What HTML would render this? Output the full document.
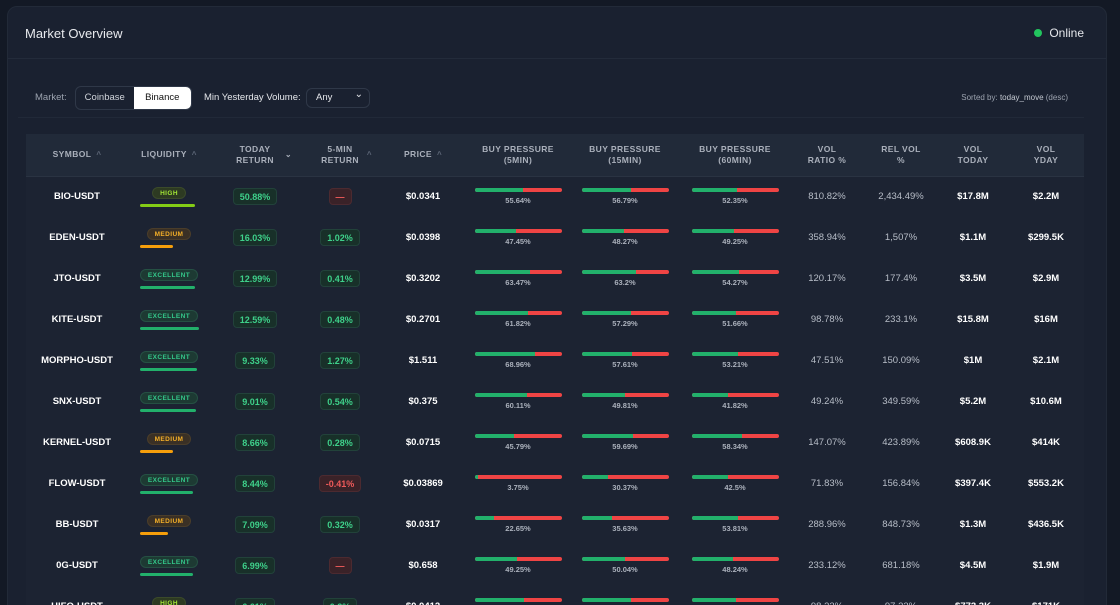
<!DOCTYPE html>
<html style="width:1120px;height:605px;overflow:hidden"><head><meta charset="utf-8"><style>
*{box-sizing:border-box;margin:0;padding:0}
html,body{width:1120px;height:605px;overflow:hidden}
body{background:#131925;font-family:"Liberation Sans",sans-serif;color:#e5e7eb;position:relative}
.card{position:absolute;left:7px;top:6px;width:1100px;height:640px;background:#1a2130;border:1px solid #222a38;border-radius:10px}
.hdr{position:absolute;left:0;top:0;width:100%;height:52px;border-bottom:1px solid #232b3a}
.title{position:absolute;left:17px;top:19px;font-size:13px;color:#e8eaee}
.online{position:absolute;right:22px;top:19px;font-size:12px;color:#e5e7eb}
.online:before{content:"";display:inline-block;width:8px;height:8px;border-radius:50%;background:#22c55e;margin-right:7px;vertical-align:0px}
.ctrl{position:absolute;left:18px;top:80px;width:1066px;height:38px;border-bottom:1px solid #212938}
.lbl{position:absolute;font-size:9.5px;color:#9ca3af}
.seg{position:absolute;left:57px;top:6px;width:117px;height:24px;border:1px solid #2f3848;border-radius:6px;display:flex;overflow:hidden;font-size:9.5px}
.seg div{flex:1;text-align:center;line-height:22px;color:#d1d5db}
.seg .on{background:#fff;color:#111}
.sel{position:absolute;left:288px;top:8px;width:64px;height:20px;border:1px solid #2f3848;border-radius:6px;font-size:9.5px;line-height:18px;padding-left:9px;color:#e5e7eb}
.sel:after{content:"⌄";position:absolute;right:6px;top:-3px;font-size:10px}
table{position:absolute;left:26px;top:134px;border-collapse:collapse;table-layout:fixed;width:1058px}
th{height:42px;background:#212a39;font-size:8.5px;color:#aab0bb;font-weight:bold;letter-spacing:.4px;line-height:11px;border-bottom:1px solid #2a3342;text-align:center;position:relative}
th span{color:#5d6677;font-size:8px;margin-left:5px}
td{height:41px;text-align:center;font-size:9.5px;color:#fff;background:#1c2332;font-weight:bold}
td.m{color:#b8bec8;font-weight:normal}
.badge{display:inline-block;padding:0 7px;height:12px;line-height:12px;border-radius:7px;font-size:6.5px;font-weight:bold;letter-spacing:.4px}
.hi{background:#2d3a22;color:#a3e635;border:1px solid #3b4a2a}
.me{background:#3a3025;color:#f5b028;border:1px solid #4a3d2a}
.ex{background:#1d3a33;color:#34c78a;border:1px solid #255043}
.ul{height:3px;border-radius:2px;margin:5px 0 0 12px}
.ret{display:inline-block;padding:0 6px;height:17px;line-height:17px;border-radius:4px;font-size:9px;background:#183029;color:#3ed08a;border:1px solid #22423a}
.neg{background:#3a2228;color:#ef5a5a;border:1px solid #4c2a30}
.bar{width:87px;height:4px;border-radius:2px;background:#ef4444;margin:0 auto;overflow:hidden}
.bar i{display:block;height:4px;background:#22b06b}
.pc{font-size:7.5px;color:#aab0bb;margin-top:4px;font-weight:bold}
</style></head><body>
<div class="card">
<div class="hdr"><div class="title">Market Overview</div><div class="online">Online</div></div>
</div>
<div class="ctrl">
<div class="lbl" style="left:17px;top:12px">Market:</div>
<div class="seg"><div>Coinbase</div><div class="on">Binance</div></div>
<div class="lbl" style="left:186px;top:12px;color:#e5e7eb">Min Yesterday Volume:</div>
<div class="sel">Any</div>
<div class="lbl" style="right:16px;top:13px;font-size:8px">Sorted by: <b style="color:#c4c9d1;font-weight:normal">today_move</b> (desc)</div>
</div>
<table>
<colgroup><col style="width:102px"><col style="width:82px"><col style="width:90px"><col style="width:80px"><col style="width:86px"><col style="width:104px"><col style="width:110px"><col style="width:110px"><col style="width:74px"><col style="width:74px"><col style="width:70px"><col style="width:76px"></colgroup>
<tr><th>SYMBOL<span>^</span></th><th>LIQUIDITY<span>^</span></th><th>TODAY<br>RETURN<span style="position:absolute;right:8px;top:15px;color:#aab0bb">⌄</span></th><th>5-MIN<br>RETURN<span style="position:absolute;right:8px;top:15px">^</span></th><th>PRICE<span>^</span></th><th>BUY PRESSURE<br>(5MIN)</th><th>BUY PRESSURE<br>(15MIN)</th><th>BUY PRESSURE<br>(60MIN)</th><th>VOL<br>RATIO %</th><th>REL VOL<br>%</th><th>VOL<br>TODAY</th><th>VOL<br>YDAY</th></tr>
<tr><td>BIO-USDT</td><td><span class="badge hi">HIGH</span><div class="ul" style="width:55px;background:#84cc16"></div></td><td><span class="ret">50.88%</span></td><td><span class="ret neg">—</span></td><td>$0.0341</td><td><div class="bar"><i style="width:55.6%"></i></div><div class="pc">55.64%</div></td><td><div class="bar"><i style="width:56.8%"></i></div><div class="pc">56.79%</div></td><td><div class="bar"><i style="width:52.3%"></i></div><div class="pc">52.35%</div></td><td class="m">810.82%</td><td class="m">2,434.49%</td><td>$17.8M</td><td>$2.2M</td></tr>
<tr><td>EDEN-USDT</td><td><span class="badge me">MEDIUM</span><div class="ul" style="width:33px;background:#f59e0b"></div></td><td><span class="ret">16.03%</span></td><td><span class="ret">1.02%</span></td><td>$0.0398</td><td><div class="bar"><i style="width:47.4%"></i></div><div class="pc">47.45%</div></td><td><div class="bar"><i style="width:48.3%"></i></div><div class="pc">48.27%</div></td><td><div class="bar"><i style="width:49.2%"></i></div><div class="pc">49.25%</div></td><td class="m">358.94%</td><td class="m">1,507%</td><td>$1.1M</td><td>$299.5K</td></tr>
<tr><td>JTO-USDT</td><td><span class="badge ex">EXCELLENT</span><div class="ul" style="width:55px;background:#22b06b"></div></td><td><span class="ret">12.99%</span></td><td><span class="ret">0.41%</span></td><td>$0.3202</td><td><div class="bar"><i style="width:63.5%"></i></div><div class="pc">63.47%</div></td><td><div class="bar"><i style="width:63.2%"></i></div><div class="pc">63.2%</div></td><td><div class="bar"><i style="width:54.3%"></i></div><div class="pc">54.27%</div></td><td class="m">120.17%</td><td class="m">177.4%</td><td>$3.5M</td><td>$2.9M</td></tr>
<tr><td>KITE-USDT</td><td><span class="badge ex">EXCELLENT</span><div class="ul" style="width:59px;background:#22b06b"></div></td><td><span class="ret">12.59%</span></td><td><span class="ret">0.48%</span></td><td>$0.2701</td><td><div class="bar"><i style="width:61.8%"></i></div><div class="pc">61.82%</div></td><td><div class="bar"><i style="width:57.3%"></i></div><div class="pc">57.29%</div></td><td><div class="bar"><i style="width:51.7%"></i></div><div class="pc">51.66%</div></td><td class="m">98.78%</td><td class="m">233.1%</td><td>$15.8M</td><td>$16M</td></tr>
<tr><td>MORPHO-USDT</td><td><span class="badge ex">EXCELLENT</span><div class="ul" style="width:57px;background:#22b06b"></div></td><td><span class="ret">9.33%</span></td><td><span class="ret">1.27%</span></td><td>$1.511</td><td><div class="bar"><i style="width:69%"></i></div><div class="pc">68.96%</div></td><td><div class="bar"><i style="width:57.6%"></i></div><div class="pc">57.61%</div></td><td><div class="bar"><i style="width:53.2%"></i></div><div class="pc">53.21%</div></td><td class="m">47.51%</td><td class="m">150.09%</td><td>$1M</td><td>$2.1M</td></tr>
<tr><td>SNX-USDT</td><td><span class="badge ex">EXCELLENT</span><div class="ul" style="width:56px;background:#22b06b"></div></td><td><span class="ret">9.01%</span></td><td><span class="ret">0.54%</span></td><td>$0.375</td><td><div class="bar"><i style="width:60.1%"></i></div><div class="pc">60.11%</div></td><td><div class="bar"><i style="width:49.8%"></i></div><div class="pc">49.81%</div></td><td><div class="bar"><i style="width:41.8%"></i></div><div class="pc">41.82%</div></td><td class="m">49.24%</td><td class="m">349.59%</td><td>$5.2M</td><td>$10.6M</td></tr>
<tr><td>KERNEL-USDT</td><td><span class="badge me">MEDIUM</span><div class="ul" style="width:33px;background:#f59e0b"></div></td><td><span class="ret">8.66%</span></td><td><span class="ret">0.28%</span></td><td>$0.0715</td><td><div class="bar"><i style="width:45.8%"></i></div><div class="pc">45.79%</div></td><td><div class="bar"><i style="width:59.7%"></i></div><div class="pc">59.69%</div></td><td><div class="bar"><i style="width:58.3%"></i></div><div class="pc">58.34%</div></td><td class="m">147.07%</td><td class="m">423.89%</td><td>$608.9K</td><td>$414K</td></tr>
<tr><td>FLOW-USDT</td><td><span class="badge ex">EXCELLENT</span><div class="ul" style="width:53px;background:#22b06b"></div></td><td><span class="ret">8.44%</span></td><td><span class="ret neg">-0.41%</span></td><td>$0.03869</td><td><div class="bar"><i style="width:3.8%"></i></div><div class="pc">3.75%</div></td><td><div class="bar"><i style="width:30.4%"></i></div><div class="pc">30.37%</div></td><td><div class="bar"><i style="width:42.5%"></i></div><div class="pc">42.5%</div></td><td class="m">71.83%</td><td class="m">156.84%</td><td>$397.4K</td><td>$553.2K</td></tr>
<tr><td>BB-USDT</td><td><span class="badge me">MEDIUM</span><div class="ul" style="width:28px;background:#f59e0b"></div></td><td><span class="ret">7.09%</span></td><td><span class="ret">0.32%</span></td><td>$0.0317</td><td><div class="bar"><i style="width:22.6%"></i></div><div class="pc">22.65%</div></td><td><div class="bar"><i style="width:35.6%"></i></div><div class="pc">35.63%</div></td><td><div class="bar"><i style="width:53.8%"></i></div><div class="pc">53.81%</div></td><td class="m">288.96%</td><td class="m">848.73%</td><td>$1.3M</td><td>$436.5K</td></tr>
<tr><td>0G-USDT</td><td><span class="badge ex">EXCELLENT</span><div class="ul" style="width:53px;background:#22b06b"></div></td><td><span class="ret">6.99%</span></td><td><span class="ret neg">—</span></td><td>$0.658</td><td><div class="bar"><i style="width:49.2%"></i></div><div class="pc">49.25%</div></td><td><div class="bar"><i style="width:50%"></i></div><div class="pc">50.04%</div></td><td><div class="bar"><i style="width:48.2%"></i></div><div class="pc">48.24%</div></td><td class="m">233.12%</td><td class="m">681.18%</td><td>$4.5M</td><td>$1.9M</td></tr>
<tr><td>HIFO-USDT</td><td><span class="badge hi">HIGH</span><div class="ul" style="width:55px;background:#84cc16"></div></td><td><span class="ret">6.61%</span></td><td><span class="ret">0.2%</span></td><td>$0.0412</td><td><div class="bar"><i style="width:57%"></i></div><div class="pc">57%</div></td><td><div class="bar"><i style="width:57%"></i></div><div class="pc">57%</div></td><td><div class="bar"><i style="width:51%"></i></div><div class="pc">51%</div></td><td class="m">98.33%</td><td class="m">97.23%</td><td>$773.3K</td><td>$171K</td></tr>
</table>
</body></html>
